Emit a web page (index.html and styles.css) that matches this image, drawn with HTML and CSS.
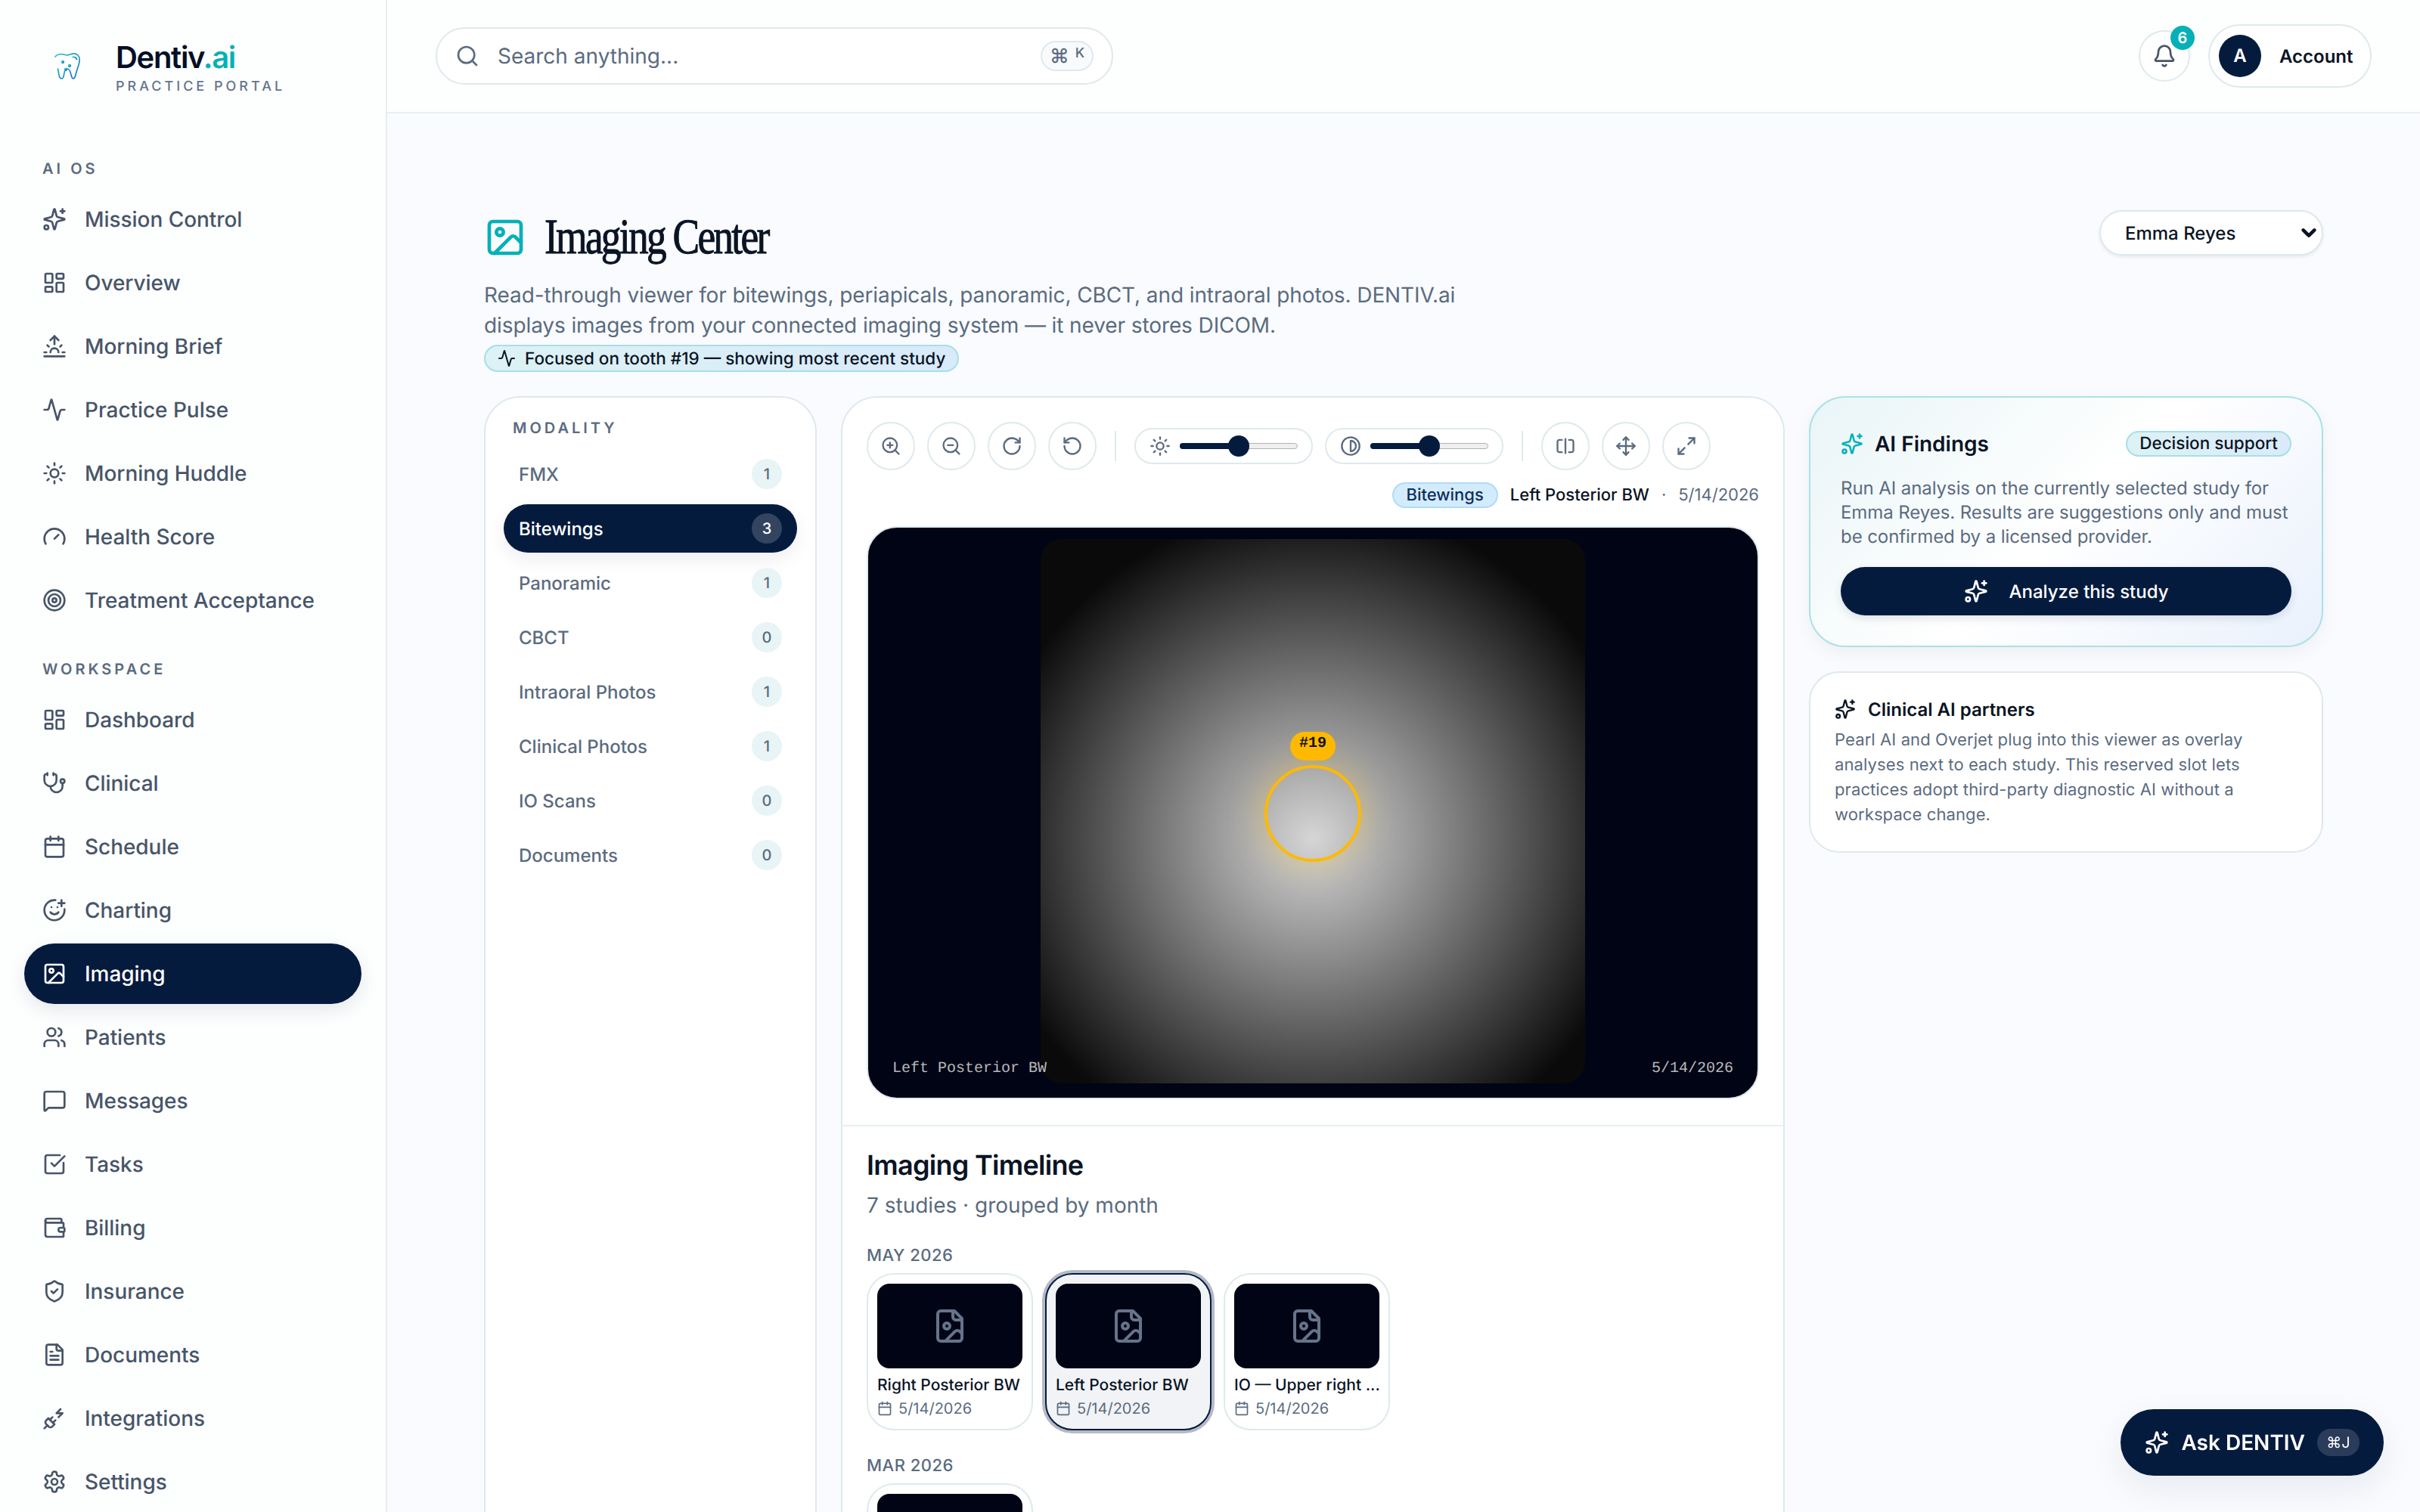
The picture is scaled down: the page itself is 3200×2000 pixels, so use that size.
FILE: index.html
```html
<!DOCTYPE html>
<html lang="en">
<head>
  <meta charset="UTF-8">
  <meta name="viewport" content="width=device-width, initial-scale=1.0">
  <title>Imaging Center - Dentiv.ai</title>
  <link rel="stylesheet" href="styles.css">
</head>
<body>
  <!-- icon sprite -->
  <svg class="sprite" xmlns="http://www.w3.org/2000/svg">
    <symbol id="i-sparkles" viewBox="0 0 24 24"><path d="M9.937 15.5A2 2 0 0 0 8.5 14.063l-6.135-1.582a.5.5 0 0 1 0-.962L8.5 9.936A2 2 0 0 0 9.937 8.5l1.582-6.135a.5.5 0 0 1 .963 0L14.063 8.5A2 2 0 0 0 15.5 9.937l6.135 1.581a.5.5 0 0 1 0 .964L15.5 14.063a2 2 0 0 0-1.437 1.437l-1.582 6.135a.5.5 0 0 1-.963 0z"/><path d="M20 2v4"/><path d="M22 4h-4"/><circle cx="4" cy="20" r="2"/></symbol>
    <symbol id="i-dashboard" viewBox="0 0 24 24"><rect x="3" y="3" width="7" height="9" rx="1"/><rect x="14" y="3" width="7" height="5" rx="1"/><rect x="14" y="12" width="7" height="9" rx="1"/><rect x="3" y="16" width="7" height="5" rx="1"/></symbol>
    <symbol id="i-sunrise" viewBox="0 0 24 24"><path d="M12 2v8"/><path d="m4.93 10.93 1.41 1.41"/><path d="M2 18h2"/><path d="M20 18h2"/><path d="m19.07 10.93-1.41 1.41"/><path d="M22 22H2"/><path d="m8 6 4-4 4 4"/><path d="M16 18a4 4 0 0 0-8 0"/></symbol>
    <symbol id="i-activity" viewBox="0 0 24 24"><path d="M22 12h-2.48a2 2 0 0 0-1.93 1.46l-2.35 8.36a.25.25 0 0 1-.48 0L9.24 2.18a.25.25 0 0 0-.48 0l-2.35 8.36A2 2 0 0 1 4.49 12H2"/></symbol>
    <symbol id="i-sun" viewBox="0 0 24 24"><circle cx="12" cy="12" r="4"/><path d="M12 2v2"/><path d="M12 20v2"/><path d="m4.93 4.93 1.41 1.41"/><path d="m17.66 17.66 1.41 1.41"/><path d="M2 12h2"/><path d="M20 12h2"/><path d="m6.34 17.66-1.41 1.41"/><path d="m19.07 4.93-1.41 1.41"/></symbol>
    <symbol id="i-gauge" viewBox="0 0 24 24"><path d="m12 14 4-4"/><path d="M3.34 19a10 10 0 1 1 17.32 0"/></symbol>
    <symbol id="i-target" viewBox="0 0 24 24"><circle cx="12" cy="12" r="10"/><circle cx="12" cy="12" r="6"/><circle cx="12" cy="12" r="2"/></symbol>
    <symbol id="i-stethoscope" viewBox="0 0 24 24"><path d="M11 2v2"/><path d="M5 2v2"/><path d="M5 3H4a2 2 0 0 0-2 2v4a6 6 0 0 0 12 0V5a2 2 0 0 0-2-2h-1"/><path d="M8 15a6 6 0 0 0 12 0v-3"/><circle cx="20" cy="10" r="2"/></symbol>
    <symbol id="i-calendar" viewBox="0 0 24 24"><path d="M8 2v4"/><path d="M16 2v4"/><rect x="3" y="4" width="18" height="18" rx="2"/><path d="M3 10h18"/></symbol>
    <symbol id="i-smile" viewBox="0 0 24 24"><path d="M22 11v1a10 10 0 1 1-9-10"/><path d="M8 14s1.5 2 4 2 4-2 4-2"/><line x1="9" x2="9.01" y1="9" y2="9"/><line x1="15" x2="15.01" y1="9" y2="9"/><path d="M16 5h6"/><path d="M19 2v6"/></symbol>
    <symbol id="i-image" viewBox="0 0 24 24"><rect x="3" y="3" width="18" height="18" rx="2"/><circle cx="9" cy="9" r="2"/><path d="m21 15-3.086-3.086a2 2 0 0 0-2.828 0L6 21"/></symbol>
    <symbol id="i-users" viewBox="0 0 24 24"><path d="M16 21v-2a4 4 0 0 0-4-4H6a4 4 0 0 0-4 4v2"/><circle cx="9" cy="7" r="4"/><path d="M22 21v-2a4 4 0 0 0-3-3.87"/><path d="M16 3.13a4 4 0 0 1 0 7.75"/></symbol>
    <symbol id="i-message" viewBox="0 0 24 24"><path d="M22 17a2 2 0 0 1-2 2H6.828a2 2 0 0 0-1.414.586l-2.202 2.202A.71.71 0 0 1 2 21.286V5a2 2 0 0 1 2-2h16a2 2 0 0 1 2 2z"/></symbol>
    <symbol id="i-check" viewBox="0 0 24 24"><path d="M21 10.656V19a2 2 0 0 1-2 2H5a2 2 0 0 1-2-2V5a2 2 0 0 1 2-2h12.344"/><path d="m9 11 3 3L22 4"/></symbol>
    <symbol id="i-wallet" viewBox="0 0 24 24"><path d="M19 7V4a1 1 0 0 0-1-1H5a2 2 0 0 0 0 4h15a1 1 0 0 1 1 1v4h-3a2 2 0 0 0 0 4h3a1 1 0 0 0 1-1v-2a1 1 0 0 0-1-1"/><path d="M3 5v14a2 2 0 0 0 2 2h15a1 1 0 0 0 1-1v-4"/></symbol>
    <symbol id="i-shield" viewBox="0 0 24 24"><path d="M20 13c0 5-3.5 7.5-7.66 8.95a1 1 0 0 1-.67-.01C7.5 20.5 4 18 4 13V6a1 1 0 0 1 1-1c2 0 4.5-1.2 6.24-2.72a1.17 1.17 0 0 1 1.52 0C14.51 3.81 17 5 19 5a1 1 0 0 1 1 1z"/><path d="m9 12 2 2 4-4"/></symbol>
    <symbol id="i-file" viewBox="0 0 24 24"><path d="M15 2H6a2 2 0 0 0-2 2v16a2 2 0 0 0 2 2h12a2 2 0 0 0 2-2V7Z"/><path d="M14 2v4a2 2 0 0 0 2 2h4"/><path d="M10 9H8"/><path d="M16 13H8"/><path d="M16 17H8"/></symbol>
    <symbol id="i-plug" viewBox="0 0 24 24"><path d="M6.3 20.3a2.4 2.4 0 0 0 3.4 0L12 18l-6-6-2.3 2.3a2.4 2.4 0 0 0 0 3.4Z"/><path d="m2 22 3-3"/><path d="M7.5 13.5 10 11"/><path d="M10.5 16.5 13 14"/><path d="m18 3-4 4h6l-4 4"/></symbol>
    <symbol id="i-settings" viewBox="0 0 24 24"><path d="M12.22 2h-.44a2 2 0 0 0-2 2v.18a2 2 0 0 1-1 1.73l-.43.25a2 2 0 0 1-2 0l-.15-.08a2 2 0 0 0-2.73.73l-.22.38a2 2 0 0 0 .73 2.73l.15.1a2 2 0 0 1 1 1.72v.51a2 2 0 0 1-1 1.74l-.15.09a2 2 0 0 0-.73 2.73l.22.38a2 2 0 0 0 2.73.73l.15-.08a2 2 0 0 1 2 0l.43.25a2 2 0 0 1 1 1.73V20a2 2 0 0 0 2 2h.44a2 2 0 0 0 2-2v-.18a2 2 0 0 1 1-1.73l.43-.25a2 2 0 0 1 2 0l.15.08a2 2 0 0 0 2.73-.73l.22-.39a2 2 0 0 0-.73-2.73l-.15-.08a2 2 0 0 1-1-1.74v-.5a2 2 0 0 1 1-1.74l.15-.09a2 2 0 0 0 .73-2.73l-.22-.38a2 2 0 0 0-2.73-.73l-.15.08a2 2 0 0 1-2 0l-.43-.25a2 2 0 0 1-1-1.73V4a2 2 0 0 0-2-2z"/><circle cx="12" cy="12" r="3"/></symbol>
    <symbol id="i-search" viewBox="0 0 24 24"><circle cx="11" cy="11" r="8"/><path d="m21 21-4.3-4.3"/></symbol>
    <symbol id="i-bell" viewBox="0 0 24 24"><path d="M10.268 21a2 2 0 0 0 3.464 0"/><path d="M3.262 15.326A1 1 0 0 0 4 17h16a1 1 0 0 0 .74-1.673C19.41 13.956 18 12.499 18 8A6 6 0 0 0 6 8c0 4.499-1.411 5.956-2.738 7.326"/></symbol>
    <symbol id="i-zoom-in" viewBox="0 0 24 24"><circle cx="11" cy="11" r="8"/><line x1="21" x2="16.65" y1="21" y2="16.65"/><line x1="11" x2="11" y1="8" y2="14"/><line x1="8" x2="14" y1="11" y2="11"/></symbol>
    <symbol id="i-zoom-out" viewBox="0 0 24 24"><circle cx="11" cy="11" r="8"/><line x1="21" x2="16.65" y1="21" y2="16.65"/><line x1="8" x2="14" y1="11" y2="11"/></symbol>
    <symbol id="i-rotate-cw" viewBox="0 0 24 24"><path d="M21 12a9 9 0 1 1-9-9c2.52 0 4.93 1 6.74 2.74L21 8"/><path d="M21 3v5h-5"/></symbol>
    <symbol id="i-rotate-ccw" viewBox="0 0 24 24"><path d="M3 12a9 9 0 1 0 9-9 9.75 9.75 0 0 0-6.74 2.74L3 8"/><path d="M3 3v5h5"/></symbol>
    <symbol id="i-contrast" viewBox="0 0 24 24"><circle cx="12" cy="12" r="10"/><path d="M12 18a6 6 0 0 0 0-12v12z"/></symbol>
    <symbol id="i-split" viewBox="0 0 24 24"><path d="M8 19H5c-1 0-2-1-2-2V7c0-1 1-2 2-2h3"/><path d="M16 5h3c1 0 2 1 2 2v10c0 1-1 2-2 2h-3"/><line x1="12" x2="12" y1="4" y2="20"/></symbol>
    <symbol id="i-move" viewBox="0 0 24 24"><path d="M12 2v20"/><path d="m15 19-3 3-3-3"/><path d="m19 9 3 3-3 3"/><path d="M2 12h20"/><path d="m5 9-3 3 3 3"/><path d="m9 5 3-3 3 3"/></symbol>
    <symbol id="i-expand" viewBox="0 0 24 24"><path d="M15 3h6v6"/><path d="m21 3-7 7"/><path d="m3 21 7-7"/><path d="M9 21H3v-6"/></symbol>
    <symbol id="i-file-image" viewBox="0 0 24 24"><path d="M15 2H6a2 2 0 0 0-2 2v16a2 2 0 0 0 2 2h12a2 2 0 0 0 2-2V7Z"/><path d="M14 2v4a2 2 0 0 0 2 2h4"/><circle cx="10" cy="12" r="2"/><path d="m20 17-1.296-1.296a2.41 2.41 0 0 0-3.408 0L9 22"/></symbol>
    <symbol id="i-chevron" viewBox="0 0 24 24"><path d="m4 8 8 8 8-8"/></symbol>
  </svg>

  <div class="app">
    <aside class="sidebar">
      <div class="brand">
        <svg class="brand-logo" viewBox="0 0 64 64" xmlns="http://www.w3.org/2000/svg">
          <defs>
            <linearGradient id="tooth" x1="0" y1="0" x2="1" y2="1">
              <stop offset="0" stop-color="#2cc4c4"/>
              <stop offset="1" stop-color="#1a6fc4"/>
            </linearGradient>
          </defs>
          <g fill="none" stroke="url(#tooth)" stroke-width="1.7" stroke-linecap="round" stroke-linejoin="round">
            <path d="M19 19c2-3 7-4 11-3 3 .8 5 1.500 7 .5 4-1.700 9-2.500 12 .5 3 3 2.500 8 1 13-1.500 4.500-3 9-4 13-.6 2.500-1.400 5-3 5s-2.300-2-3-5c-.7-3-1.500-8-5-8-3 0-4 4-4.500 8-.4 3-1.200 5-3 5s-3-2.500-3.500-5c-.5-2.500-1-5.500-1.500-8"/>
            <path d="M42 19.500c2.500-.6 4.500.5 5.500 3"/>
            <path d="M14 26h13"/>
            <path d="M14 31h22"/>
            <path d="M17 36h14"/>
            <path d="M20 22.500h10"/>
            <circle cx="29" cy="26" r="1.300"/>
            <circle cx="38" cy="31" r="1.300"/>
            <circle cx="33" cy="36" r="1.300"/>
          </g>
        </svg>
        <div>
          <div class="brand-name">Dentiv<span class="brand-dot">.ai</span></div>
          <div class="brand-sub">PRACTICE PORTAL</div>
        </div>
      </div>

      <div class="nav-label first">AI OS</div>
      <nav class="nav">
        <a class="nav-item"><svg class="icon"><use href="#i-sparkles"/></svg>Mission Control</a>
        <a class="nav-item"><svg class="icon"><use href="#i-dashboard"/></svg>Overview</a>
        <a class="nav-item"><svg class="icon"><use href="#i-sunrise"/></svg>Morning Brief</a>
        <a class="nav-item"><svg class="icon"><use href="#i-activity"/></svg>Practice Pulse</a>
        <a class="nav-item"><svg class="icon"><use href="#i-sun"/></svg>Morning Huddle</a>
        <a class="nav-item"><svg class="icon"><use href="#i-gauge"/></svg>Health Score</a>
        <a class="nav-item"><svg class="icon"><use href="#i-target"/></svg>Treatment Acceptance</a>
      </nav>

      <div class="nav-label">WORKSPACE</div>
      <nav class="nav">
        <a class="nav-item"><svg class="icon"><use href="#i-dashboard"/></svg>Dashboard</a>
        <a class="nav-item"><svg class="icon"><use href="#i-stethoscope"/></svg>Clinical</a>
        <a class="nav-item"><svg class="icon"><use href="#i-calendar"/></svg>Schedule</a>
        <a class="nav-item"><svg class="icon"><use href="#i-smile"/></svg>Charting</a>
        <a class="nav-item active"><svg class="icon"><use href="#i-image"/></svg>Imaging</a>
        <a class="nav-item"><svg class="icon"><use href="#i-users"/></svg>Patients</a>
        <a class="nav-item"><svg class="icon"><use href="#i-message"/></svg>Messages</a>
        <a class="nav-item"><svg class="icon"><use href="#i-check"/></svg>Tasks</a>
        <a class="nav-item"><svg class="icon"><use href="#i-wallet"/></svg>Billing</a>
        <a class="nav-item"><svg class="icon"><use href="#i-shield"/></svg>Insurance</a>
        <a class="nav-item"><svg class="icon"><use href="#i-file"/></svg>Documents</a>
        <a class="nav-item"><svg class="icon"><use href="#i-plug"/></svg>Integrations</a>
        <a class="nav-item"><svg class="icon"><use href="#i-settings"/></svg>Settings</a>
      </nav>
    </aside>

    <div class="main">
      <header class="topbar">
        <div class="search">
          <svg class="icon search-icon"><use href="#i-search"/></svg>
          <span class="search-text">Search anything...</span>
          <span class="search-kbd"><span class="cmd">⌘</span><span class="kbd-k">K</span></span>
        </div>
        <div class="topbar-right">
          <div class="bell">
            <svg class="icon"><use href="#i-bell"/></svg>
            <span class="bell-badge">6</span>
          </div>
          <div class="account">
            <span class="avatar">A</span>
            <span class="account-name">Account</span>
          </div>
        </div>
      </header>

      <main class="content">
        <div class="page-head">
          <div>
            <div class="title-row">
              <svg class="icon title-icon"><use href="#i-image"/></svg>
              <h1 class="page-title">Imaging Center</h1>
            </div>
            <p class="page-desc">Read-through viewer for bitewings, periapicals, panoramic, CBCT, and intraoral photos. DENTIV.ai displays images from your connected imaging system — it never stores DICOM.</p>
            <span class="focus-chip"><svg class="icon"><use href="#i-activity"/></svg>Focused on tooth #19 — showing most recent study</span>
          </div>
          <div class="patient-select">
            <span>Emma Reyes</span>
            <svg class="icon"><use href="#i-chevron"/></svg>
          </div>
        </div>

        <div class="layout">
          <section class="panel modality">
            <div class="modality-label">MODALITY</div>
            <div class="modality-list">
              <div class="modality-row"><span>FMX</span><span class="count">1</span></div>
              <div class="modality-row active"><span>Bitewings</span><span class="count">3</span></div>
              <div class="modality-row"><span>Panoramic</span><span class="count">1</span></div>
              <div class="modality-row"><span>CBCT</span><span class="count">0</span></div>
              <div class="modality-row"><span>Intraoral Photos</span><span class="count">1</span></div>
              <div class="modality-row"><span>Clinical Photos</span><span class="count">1</span></div>
              <div class="modality-row"><span>IO Scans</span><span class="count">0</span></div>
              <div class="modality-row"><span>Documents</span><span class="count">0</span></div>
            </div>
          </section>

          <section class="panel center">
            <div class="viewer-wrap">
              <div class="toolbar">
                <button class="tool"><svg class="icon"><use href="#i-zoom-in"/></svg></button>
                <button class="tool"><svg class="icon"><use href="#i-zoom-out"/></svg></button>
                <button class="tool"><svg class="icon"><use href="#i-rotate-cw"/></svg></button>
                <button class="tool"><svg class="icon"><use href="#i-rotate-ccw"/></svg></button>
                <span class="tool-sep"></span>
                <div class="slider-pill">
                  <svg class="icon"><use href="#i-sun"/></svg>
                  <div class="slider"><span class="slider-fill"></span><span class="slider-thumb"></span></div>
                </div>
                <div class="slider-pill">
                  <svg class="icon"><use href="#i-contrast"/></svg>
                  <div class="slider"><span class="slider-fill"></span><span class="slider-thumb"></span></div>
                </div>
                <span class="tool-sep"></span>
                <button class="tool"><svg class="icon"><use href="#i-split"/></svg></button>
                <button class="tool"><svg class="icon"><use href="#i-move"/></svg></button>
                <button class="tool"><svg class="icon"><use href="#i-expand"/></svg></button>
              </div>

              <div class="study-meta">
                <span class="study-chip">Bitewings</span>
                <span class="study-name">Left Posterior BW</span>
                <span class="study-dot">·</span>
                <span class="study-date">5/14/2026</span>
              </div>

              <div class="viewer">
                <div class="xray">
                  <div class="tooth-marker">
                    <span class="tooth-tag">#19</span>
                  </div>
                </div>
                <span class="viewer-cap left">Left Posterior BW</span>
                <span class="viewer-cap right">5/14/2026</span>
              </div>
            </div>

            <div class="timeline">
              <h2 class="timeline-title">Imaging Timeline</h2>
              <p class="timeline-sub">7 studies · grouped by month</p>

              <div class="month">MAY 2026</div>
              <div class="study-row">
                <div class="study-card">
                  <div class="thumb"><svg class="icon"><use href="#i-file-image"/></svg></div>
                  <div class="card-name">Right Posterior BW</div>
                  <div class="card-date"><svg class="icon"><use href="#i-calendar"/></svg>5/14/2026</div>
                </div>
                <div class="study-card selected">
                  <div class="thumb"><svg class="icon"><use href="#i-file-image"/></svg></div>
                  <div class="card-name">Left Posterior BW</div>
                  <div class="card-date"><svg class="icon"><use href="#i-calendar"/></svg>5/14/2026</div>
                </div>
                <div class="study-card">
                  <div class="thumb"><svg class="icon"><use href="#i-file-image"/></svg></div>
                  <div class="card-name">IO — Upper right ...</div>
                  <div class="card-date"><svg class="icon"><use href="#i-calendar"/></svg>5/14/2026</div>
                </div>
              </div>

              <div class="month">MAR 2026</div>
              <div class="study-row">
                <div class="study-card">
                  <div class="thumb"><svg class="icon"><use href="#i-file-image"/></svg></div>
                </div>
              </div>
            </div>
          </section>

          <aside class="side">
            <section class="findings">
              <div class="findings-head">
                <div class="findings-title"><svg class="icon"><use href="#i-sparkles"/></svg>AI Findings</div>
                <span class="support-chip">Decision support</span>
              </div>
              <p class="findings-text">Run AI analysis on the currently selected study for Emma Reyes. Results are suggestions only and must be confirmed by a licensed provider.</p>
              <button class="analyze"><svg class="icon"><use href="#i-sparkles"/></svg>Analyze this study</button>
            </section>

            <section class="partners">
              <div class="partners-title"><svg class="icon"><use href="#i-sparkles"/></svg>Clinical AI partners</div>
              <p class="partners-text">Pearl AI and Overjet plug into this viewer as overlay analyses next to each study. This reserved slot lets practices adopt third-party diagnostic AI without a workspace change.</p>
            </section>
          </aside>
        </div>
      </main>
    </div>
  </div>

  <button class="ask">
    <svg class="icon"><use href="#i-sparkles"/></svg>
    <span>Ask DENTIV</span>
    <span class="ask-kbd">⌘J</span>
  </button>
</body>
</html>
```

FILE: styles.css
```css
* {
  box-sizing: border-box;
}
html, body {
  height: 100%;
}
body {
  margin: 0;
  overflow: hidden;
  background: #f9fbfe;
  color: #0a1424;
  font-family: Inter, "Noto Sans", sans-serif;
  text-rendering: geometricPrecision;
}
h1, h2, p {
  margin: 0;
}
button {
  font-family: inherit;
  text-rendering: inherit;
  cursor: pointer;
}
.sprite {
  display: none;
}
.icon {
  width: 32px;
  height: 32px;
  flex: none;
  fill: none;
  stroke: currentColor;
  stroke-width: 2;
  stroke-linecap: round;
  stroke-linejoin: round;
}

.app {
  display: flex;
  height: 2000px;
}

/* sidebar */
.sidebar {
  width: 512px;
  flex: none;
  height: 100%;
  padding: 0 32px;
  overflow: hidden;
  background: #fdfefe;
  border-right: 2px solid #e6eff2;
}
.brand {
  display: flex;
  align-items: flex-start;
  gap: 35px;
  height: 176px;
  padding: 54px 0 0 22px;
}
.brand-logo {
  width: 64px;
  height: 64px;
  margin-top: 2px;
  flex: none;
}
.brand-name {
  font-size: 40px;
  line-height: 44px;
  font-weight: 600;
  letter-spacing: -1.3px;
  color: #050f24;
}
.brand-dot {
  color: #06b0b8;
}
.brand-sub {
  margin-top: 2px;
  font-size: 18px;
  line-height: 30px;
  font-weight: 500;
  letter-spacing: 4px;
  color: #64748b;
}
.nav-label {
  margin: 36px 0 12px;
  padding-left: 24px;
  font-size: 20px;
  line-height: 30px;
  font-weight: 600;
  letter-spacing: 4px;
  color: #5b6b7f;
}
.nav-label.first {
  margin-top: 32px;
}
.nav {
  display: flex;
  flex-direction: column;
  gap: 4px;
}
.nav-item {
  display: flex;
  align-items: center;
  gap: 24px;
  height: 80px;
  padding: 0 24px;
  border-radius: 40px;
  font-size: 28px;
  font-weight: 500;
  letter-spacing: -0.05px;
  color: #475569;
}
.nav-item.active {
  background: #051b3e;
  color: #fff;
  box-shadow: 0 8px 24px rgba(5, 27, 62, 0.1);
}

/* top bar */
.main {
  flex: 1;
  min-width: 0;
  height: 100%;
  overflow: hidden;
}
.topbar {
  display: flex;
  align-items: center;
  justify-content: space-between;
  height: 150px;
  padding: 0 64px;
  background: #fdfefe;
  border-bottom: 2px solid #e6eff2;
}
.search {
  display: flex;
  align-items: center;
  width: 896px;
  height: 76px;
  padding: 0 24px 0 24px;
  background: #fff;
  border: 2px solid #dfe9ed;
  border-radius: 38px;
}
.search-icon {
  width: 32px;
  height: 32px;
  color: #5b6b7f;
}
.search-text {
  flex: 1;
  margin-left: 24px;
  font-size: 28px;
  color: #5b6b7f;
}
.search-kbd {
  display: flex;
  align-items: flex-start;
  justify-content: center;
  gap: 8px;
  width: 70px;
  height: 40px;
  padding-top: 4px;
  background: #f8fafc;
  border: 2px solid #dfe9ed;
  border-radius: 20px;
  font-size: 18px;
  line-height: 22px;
  font-weight: 500;
  color: #5b6b7f;
}
.search-kbd .cmd {
  font-size: 26px;
  line-height: 30px;
}
.topbar-right {
  display: flex;
  align-items: center;
  gap: 24px;
}
.bell {
  position: relative;
  display: flex;
  align-items: center;
  justify-content: center;
  width: 68px;
  height: 68px;
  background: #fff;
  border: 2px solid #dfe9ed;
  border-radius: 50%;
  color: #475569;
}
.bell-badge {
  position: absolute;
  top: -8px;
  right: -8px;
  width: 32px;
  height: 32px;
  border-radius: 50%;
  background: #06b0b8;
  color: #fff;
  font-size: 20px;
  line-height: 32px;
  font-weight: 600;
  text-align: center;
}
.account {
  display: flex;
  align-items: center;
  gap: 24px;
  width: 216px;
  height: 84px;
  padding-left: 12px;
  background: #fff;
  border: 2px solid #dfe9ed;
  border-radius: 42px;
}
.avatar {
  width: 56px;
  height: 56px;
  border-radius: 50%;
  background: #051b3e;
  color: #fff;
  font-size: 24px;
  line-height: 56px;
  font-weight: 600;
  text-align: center;
}
.account-name {
  font-size: 24px;
  font-weight: 600;
}

/* page head */
.content {
  padding: 128px 128px 0;
}
.page-head {
  display: flex;
  justify-content: space-between;
  align-items: flex-start;
  margin-bottom: 32px;
}
.title-row {
  display: flex;
  align-items: center;
  gap: 24px;
  height: 72px;
  margin-bottom: 20px;
}
.title-icon {
  width: 56px;
  height: 56px;
  color: #06b0b8;
}
.page-title {
  font-family: "Liberation Serif", serif;
  font-size: 66px;
  line-height: 72px;
  font-weight: 400;
  letter-spacing: -3.4px;
  -webkit-text-stroke: 1px #0a1424;
  transform: scaleX(0.81);
  transform-origin: left center;
}
.page-desc {
  width: 1344px;
  font-size: 28px;
  line-height: 40px;
  letter-spacing: -0.1px;
  color: #5b6b7f;
}
.focus-chip {
  display: inline-flex;
  align-items: center;
  gap: 12px;
  height: 36px;
  margin-top: 6px;
  padding: 0 16px;
  vertical-align: top;
  background: linear-gradient(90deg, #dcf2f4, #d9eafa);
  border: 2px solid #a5e0e6;
  border-radius: 18px;
  font-size: 22.5px;
  font-weight: 500;
  color: #0a1424;
}
.focus-chip .icon {
  width: 24px;
  height: 24px;
}
.patient-select {
  display: flex;
  align-items: center;
  justify-content: space-between;
  width: 296px;
  height: 60px;
  padding: 0 6px 0 32px;
  background: #fff;
  border: 2px solid #dfe9ed;
  border-radius: 30px;
  box-shadow: 0 2px 4px rgba(5, 27, 62, 0.08);
  font-size: 24px;
  font-weight: 500;
}
.patient-select .icon {
  width: 22px;
  height: 22px;
  stroke-width: 5;
}

/* three columns */
.layout {
  display: grid;
  grid-template-columns: 440px 1248px 680px;
  gap: 32px;
  align-items: stretch;
}
.panel {
  background: #fff;
  border: 2px solid #dfe9ed;
  border-radius: 48px;
}
.modality {
  padding: 24px 24px 0;
}
.modality-label {
  padding: 1px 0 0 12px;
  margin-bottom: 14px;
  font-size: 20px;
  line-height: 30px;
  font-weight: 600;
  letter-spacing: 4px;
  color: #5b6b7f;
}
.modality-list {
  display: flex;
  flex-direction: column;
  gap: 8px;
}
.modality-row {
  display: flex;
  align-items: center;
  justify-content: space-between;
  height: 64px;
  padding: 0 20px;
  border-radius: 32px;
  font-size: 24px;
  font-weight: 500;
  color: #5b6b7f;
}
.modality-row.active {
  background: #051b3e;
  color: #fff;
  box-shadow: 0 8px 24px rgba(5, 27, 62, 0.08);
}
.count {
  width: 40px;
  height: 40px;
  border-radius: 50%;
  background: #e8f4f6;
  font-size: 20px;
  line-height: 40px;
  text-align: center;
}
.modality-row.active .count {
  background: rgba(255, 255, 255, 0.18);
}

/* viewer */
.viewer-wrap {
  padding: 32px 32px 34px;
  border-bottom: 2px solid #e6eff2;
}
.toolbar {
  display: flex;
  align-items: center;
  gap: 16px;
}
.tool {
  display: flex;
  align-items: center;
  justify-content: center;
  width: 64px;
  height: 64px;
  padding: 0;
  background: #fff;
  border: 2px solid #dfe9ed;
  border-radius: 50%;
  color: #5b6b7f;
}
.tool .icon {
  width: 28px;
  height: 28px;
}
.tool-sep {
  width: 2px;
  height: 40px;
  margin: 0 8px;
  background: #dfe9ed;
}
.slider-pill {
  display: flex;
  align-items: center;
  gap: 12px;
  width: 236px;
  height: 48px;
  padding: 0 18px;
  background: #fff;
  border: 2px solid #dfe9ed;
  border-radius: 24px;
  color: #5b6b7f;
}
.slider-pill .icon {
  width: 28px;
  height: 28px;
}
.slider {
  position: relative;
  width: 156px;
  height: 8px;
  background: #efefef;
  border: 1px solid #b2b2b2;
  border-radius: 4px;
}
.slider-fill {
  position: absolute;
  top: -1px;
  left: -1px;
  bottom: -1px;
  width: 50%;
  background: #051b3e;
  border-radius: 4px 0 0 4px;
}
.slider-thumb {
  position: absolute;
  top: 50%;
  left: 50%;
  width: 28px;
  height: 28px;
  margin: -14px 0 0 -14px;
  border-radius: 50%;
  background: #051b3e;
}
.study-meta {
  display: flex;
  align-items: center;
  justify-content: flex-end;
  gap: 16px;
  height: 34px;
  margin: 16px 0 24px;
  font-size: 22px;
  font-weight: 500;
}
.study-chip {
  padding: 0 17px;
  line-height: 30px;
  background: #d3ecfd;
  border: 2px solid #b0dbf7;
  border-radius: 17px;
  color: #0f2f5c;
}
.study-dot, .study-date {
  color: #5b6b7f;
  font-weight: 400;
}
.viewer {
  position: relative;
  display: flex;
  align-items: flex-start;
  justify-content: center;
  height: 758px;
  padding-top: 15px;
  background: #010414;
  border: 2px solid #dfe9ed;
  border-radius: 40px;
  overflow: hidden;
}
.xray {
  position: relative;
  width: 720px;
  height: 720px;
  border-radius: 28px;
  background: radial-gradient(circle at 50% 55%, #d6d6d6 0%, #0a0a0a 82%);
}
.tooth-marker {
  position: absolute;
  top: 299px;
  left: 296px;
  width: 128px;
  height: 128px;
  border: 4px solid #ffb900;
  border-radius: 50%;
  box-shadow: 0 0 48px rgba(255, 185, 0, 0.35);
}
.tooth-tag {
  position: absolute;
  top: -48px;
  left: 30px;
  width: 60px;
  height: 38px;
  border-radius: 19px;
  background: #ffb900;
  color: #111;
  font-family: "Liberation Mono", monospace;
  font-size: 20px;
  line-height: 32px;
  font-weight: 700;
  text-align: center;
}
.viewer-cap {
  position: absolute;
  bottom: 25px;
  font-family: "Liberation Mono", monospace;
  font-size: 20px;
  line-height: 26px;
  color: rgba(255, 255, 255, 0.72);
}
.viewer-cap.left {
  left: 32px;
}
.viewer-cap.right {
  right: 32px;
}

/* timeline */
.timeline {
  padding: 31px 32px 0;
  height: 600px;
}
.timeline-title {
  font-size: 36px;
  line-height: 40px;
  font-weight: 600;
  letter-spacing: -0.7px;
}
.timeline-sub {
  margin-top: 13px;
  font-size: 28px;
  line-height: 40px;
  color: #5b6b7f;
}
.month {
  margin: 32px 0 8px;
  font-size: 22px;
  line-height: 30px;
  font-weight: 500;
  letter-spacing: 0.5px;
  color: #5b6b7f;
}
.study-row {
  display: flex;
  gap: 16px;
}
.study-card {
  width: 220px;
  height: 208px;
  padding: 12px;
  background: #fff;
  border: 2px solid #dfe9ed;
  border-radius: 36px;
}
.study-card.selected {
  background: #f1f3f6;
  border-color: #051b3e;
  box-shadow: 0 0 0 4px rgba(5, 27, 62, 0.3);
}
.thumb {
  display: flex;
  align-items: center;
  justify-content: center;
  height: 112px;
  background: #010414;
  border-radius: 16px;
  color: #64748b;
}
.thumb .icon {
  width: 48px;
  height: 48px;
}
.card-name {
  margin-top: 8px;
  font-size: 21px;
  line-height: 30px;
  font-weight: 500;
  white-space: nowrap;
}
.card-date {
  display: flex;
  align-items: center;
  gap: 8px;
  margin-top: 1px;
  font-size: 20px;
  line-height: 28px;
  color: #5b6b7f;
}
.card-date .icon {
  width: 20px;
  height: 20px;
}

/* right column */
.side {
  display: flex;
  flex-direction: column;
  gap: 32px;
}
.findings {
  height: 332px;
  padding: 44px 40px 40px;
  background: linear-gradient(135deg, #e9f5f7 0%, #ffffff 50%, #e9f1fc 100%);
  border: 2px solid #aae1e6;
  border-radius: 48px;
  box-shadow: 0 8px 24px rgba(5, 27, 62, 0.05);
}
.findings-head {
  display: flex;
  align-items: center;
  justify-content: space-between;
  height: 34px;
}
.findings-title {
  display: flex;
  align-items: center;
  gap: 15px;
  font-size: 28px;
  font-weight: 600;
}
.findings-title .icon {
  width: 30px;
  height: 30px;
  color: #06b0b8;
}
.support-chip {
  padding: 0 16px;
  line-height: 30px;
  background: linear-gradient(90deg, #dcf2f4, #dbeafa);
  border: 2px solid #a5e0e6;
  border-radius: 17px;
  font-size: 22.5px;
  font-weight: 500;
}
.findings-text {
  margin-top: 26px;
  font-size: 24px;
  line-height: 32px;
  letter-spacing: -0.07px;
  color: #5b6b7f;
}
.analyze {
  display: flex;
  align-items: center;
  justify-content: center;
  gap: 28px;
  width: 100%;
  height: 64px;
  margin-top: 24px;
  background: #051b3e;
  border: 0;
  border-radius: 32px;
  box-shadow: 0 4px 12px rgba(5, 27, 62, 0.12);
  color: #fff;
  font-size: 24px;
  font-weight: 500;
}
.partners {
  height: 240px;
  padding: 30px 32px 32px;
  background: #fff;
  border: 2px solid #dfe9ed;
  border-radius: 40px;
}
.partners-title {
  display: flex;
  align-items: center;
  gap: 16px;
  height: 36px;
  font-size: 24px;
  font-weight: 600;
}
.partners-title .icon {
  width: 28px;
  height: 28px;
}
.partners-text {
  margin-top: 7px;
  font-size: 22px;
  line-height: 33px;
  letter-spacing: 0.1px;
  color: #5b6b7f;
}

/* floating assistant button */
.ask {
  position: fixed;
  right: 48px;
  bottom: 48px;
  display: flex;
  align-items: center;
  gap: 16px;
  height: 88px;
  padding: 0 32px;
  background: #051b3e;
  border: 0;
  border-radius: 44px;
  box-shadow: 0 16px 48px rgba(5, 27, 62, 0.08);
  color: #fff;
  font-size: 28px;
  font-weight: 600;
}
.ask-kbd {
  width: 56px;
  height: 36px;
  border-radius: 18px;
  background: rgba(255, 255, 255, 0.15);
  font-size: 20px;
  line-height: 36px;
  font-weight: 400;
  text-align: center;
}
```
